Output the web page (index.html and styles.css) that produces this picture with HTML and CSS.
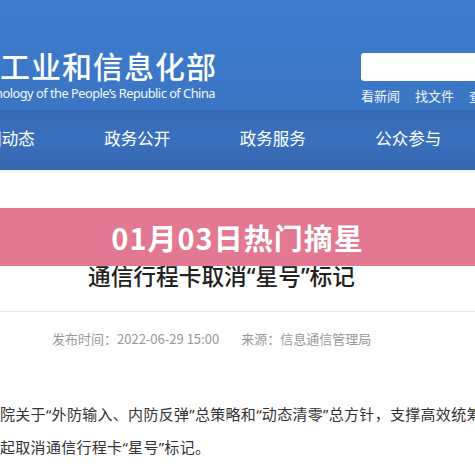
FILE: index.html
```html
<!DOCTYPE html>
<html lang="zh-CN">
<head>
  <meta charset="UTF-8">
  <title>01月03日热门摘星</title>
  <meta name="viewport" content="width=device-width,initial-scale=1">
  <link rel="stylesheet" href="styles.css">
</head>
<body>

<!-- Ministry header -->
<header class="site-header">
  <div class="top-row">
    <div class="logo">
      <div class="logo-cn">中华人民共和国工业和信息化部</div>
      <div class="logo-en">Ministry of Industry and Information Technology of the People’s Republic of China</div>
    </div>
    <div class="search-area">
      <div class="search-box"></div>
      <div class="quick-links">
        <span>看新闻</span>
        <span>找文件</span>
        <span>查数据</span>
      </div>
    </div>
  </div>
  <nav class="main-nav">
    <span>新闻动态</span>
    <span>政务公开</span>
    <span>政务服务</span>
    <span>公众参与</span>
  </nav>
</header>

<!-- Article -->
<main class="article">
  <h1 class="article-title">通信行程卡取消“星号”标记</h1>
  <div class="article-meta">
    <span>发布时间：2022-06-29 15:00</span>
    <span>来源：信息通信管理局</span>
  </div>
  <div class="article-body">
    <p>院关于“外防输入、内防反弹”总策略和“动态清零”总方针，支撑高效统筹疫情防控和经济社会发展，</p>
    <p>起取消通信行程卡“星号”标记。</p>
  </div>
</main>

<!-- Overlay banner -->
<div class="banner">01月03日热门摘星</div>

</body>
</html>
```

FILE: styles.css
```css
/* Colours */
:root {
  --pink: #e27891;
  --text-dark: #222;
  --text-body: #333;
  --text-muted: #999;
}
html, body {
  margin: 0;
  padding: 0;
  width: 475px;
  height: 475px;
  overflow: hidden;
  background: #fff;
  font-family: "Noto Sans CJK SC", "Noto Sans", sans-serif;
  position: relative;
}

/* Header */
.site-header {
  height: 170px;
  background: linear-gradient(180deg, #3e7ccf 0%, #3b76c4 60%, #3a72bd 100%);
  color: #fff;
  display: flex;
  flex-direction: column;
}
.top-row {
  height: 110px;
  display: flex;
  align-items: flex-start;
}
.logo {
  width: 217px;
  overflow: hidden;
  display: flex;
  flex-direction: column;
  align-items: flex-end;
  padding-top: 45px;
  white-space: nowrap;
}
.logo-cn {
  font-size: 30px;
  font-weight: 500;
  line-height: 40px;
  letter-spacing: 1px;
}
.logo-en {
  font-family: "Noto Sans", "Open Sans", sans-serif;
  font-size: 12.8px;
  line-height: 18px;
  letter-spacing: -0.5px;
  margin-top: -1px;
  margin-right: 2px;
  opacity: 0.95;
}
.search-area {
  margin-left: 144px;
  padding-top: 53px;
  flex: 1;
  min-width: 0;
}
.search-box {
  height: 28px;
  background: #fff;
  border-radius: 3px 0 0 3px;
  width: 140px;
}
.quick-links {
  display: flex;
  gap: 15px;
  font-size: 13px;
  line-height: 30px;
  white-space: nowrap;
  color: #f2f6fc;
}

/* Main navigation */
.main-nav {
  flex: 1;
  background: linear-gradient(180deg, #3569b3 0%, #3a70bd 50%, #3465ad 100%);
  display: flex;
  align-items: center;
  margin-left: -66px;
  padding-bottom: 4px;
  box-sizing: border-box;
  font-size: 16.5px;
  white-space: nowrap;
}
.main-nav span {
  width: 135.5px;
  flex: none;
  text-align: center;
}

/* Article */
.article {
  box-shadow: inset 0 7px 6px -5px rgba(0, 0, 0, 0.06);
  padding-top: 93px;
}
.article-title {
  margin: 0;
  padding-left: 88px;
  font-family: "Noto Sans", "Noto Sans CJK SC", sans-serif;
  font-size: 22.7px;
  font-weight: 500;
  line-height: 28px;
  color: var(--text-dark);
  padding-bottom: 20px;
  border-bottom: 1px solid #e6e6e6;
  white-space: nowrap;
}
.article-meta {
  padding: 16px 0 0 52px;
  display: flex;
  gap: 22px;
  font-size: 13px;
  line-height: 22px;
  color: var(--text-muted);
}
.article-body {
  padding-top: 48px;
}
.article-body p {
  margin: 0;
  font-family: "Noto Sans", "Noto Sans CJK SC", sans-serif;
  font-size: 15px;
  line-height: 33px;
  letter-spacing: 0.3px;
  color: var(--text-body);
  white-space: nowrap;
}

/* Overlay banner */
.banner {
  position: absolute;
  left: 0;
  right: 0;
  top: 208px;
  height: 58px;
  background: var(--pink);
  color: #fff;
  font-size: 29px;
  font-weight: 700;
  display: flex;
  align-items: center;
  justify-content: center;
  letter-spacing: 1px;
}
```
